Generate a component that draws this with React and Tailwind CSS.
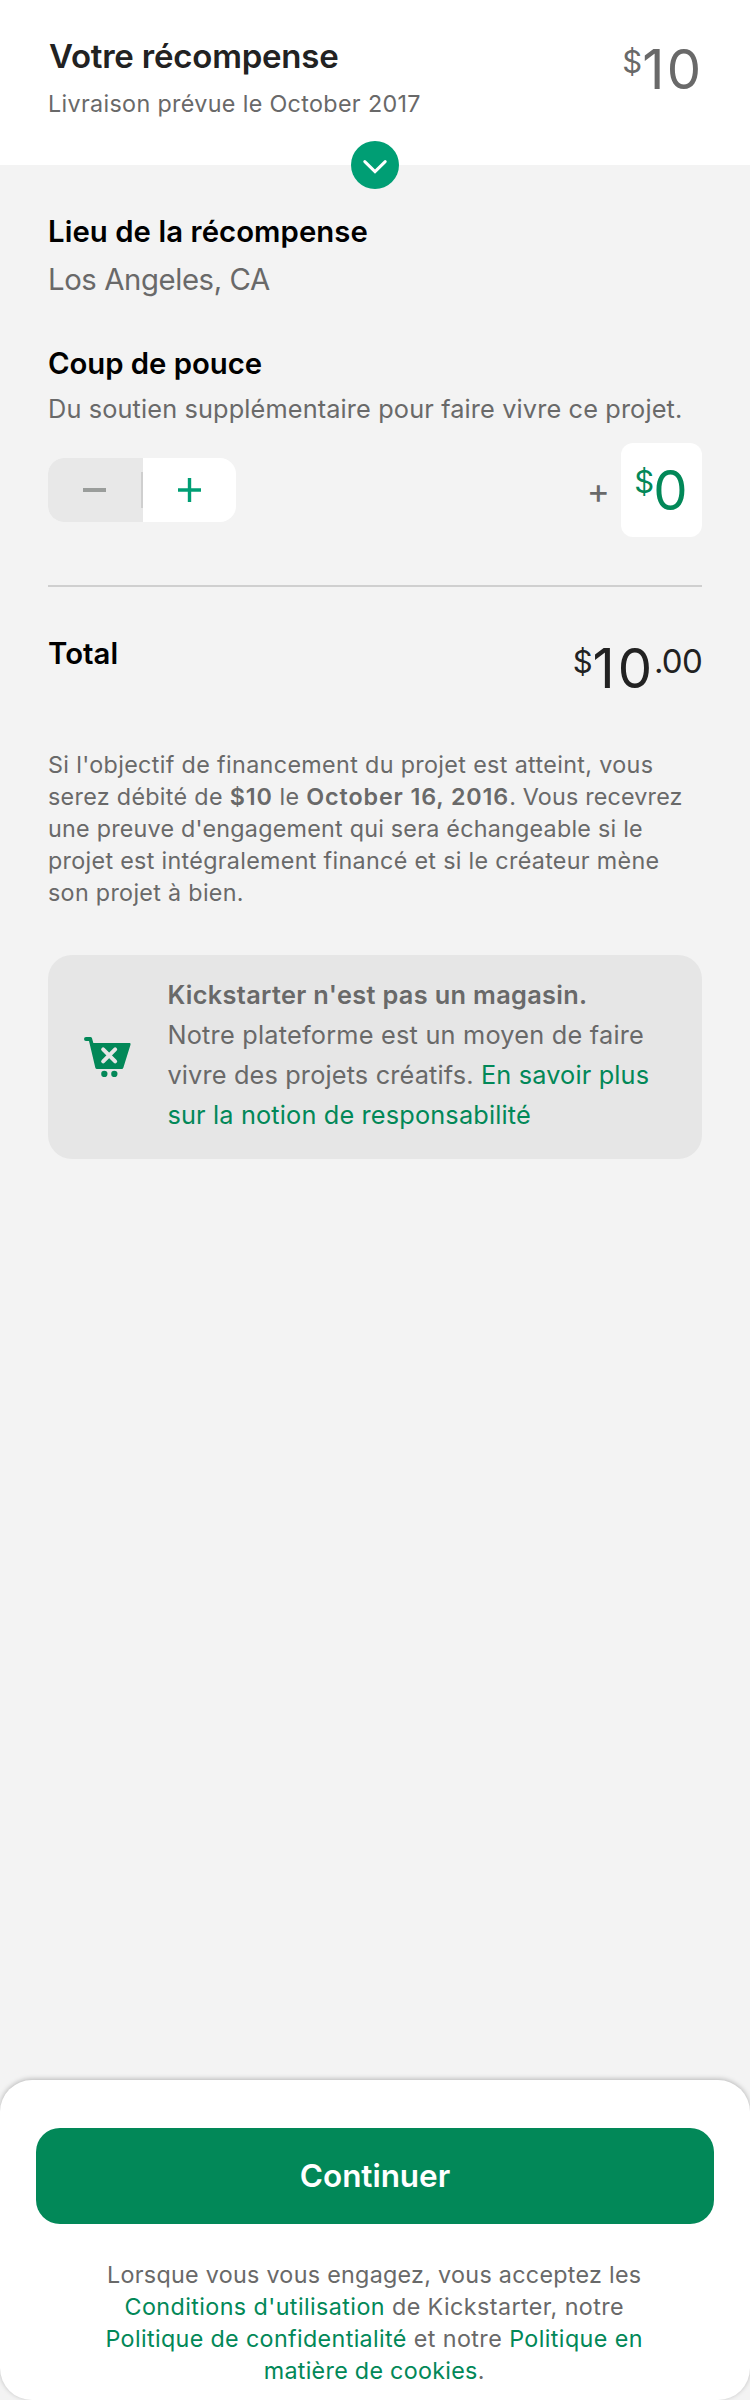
const Chevron = () => (
  <svg viewBox="0 0 48 48" className="size-12" fill="none" stroke="white" strokeWidth="3" strokeLinecap="round">
    <path d="M13.8 20.6 24 30.6 34.2 20.6" />
  </svg>
);

const Plus = () => (
  <svg viewBox="0 0 23 24" className="h-6 w-[23px]" stroke="#009e74" strokeWidth="3.4">
    <path d="M0 12H23M11.5 0V24" />
  </svg>
);

const Cart = () => (
  <svg viewBox="0 0 141 120" className="h-10 w-[47px]" fill="#028858">
    <path d="M6 0H19Q23 0 24 4L28 18H137Q141 18 139.5 23L118 92Q117 96 113 96H39Q35 96 34 92L15 12H6Q0 12 0 6T6 0Z" />
    <path d="M57.5 37 93.5 73M93.5 37 57.5 73" stroke="#e6e6e6" strokeWidth="12" strokeLinecap="round" />
    <circle cx="61" cy="111" r="9.5" />
    <circle cx="91" cy="111" r="9.5" />
  </svg>
);

const RewardHeader = () => (
  <header className="relative flex h-[165px] items-start justify-between bg-white px-12 pt-9">
    <div>
      <h1 className="ml-px text-[33px] leading-[40px] font-semibold tracking-[-0.213px] text-[#222]">Votre récompense</h1>
      <p className="mt-3 text-[23.3px] leading-[32px] tracking-[0.346px]">Livraison prévue le October 2017</p>
    </div>
    <div className="flex items-start">
      <span className="mt-1.5 text-[31px] leading-[40px]">$</span>
      <span className="mr-[-1.4px] text-[54.5px] leading-[66px] tracking-[2.3px]">10</span>
    </div>
    <button className="absolute -bottom-6 left-1/2 -translate-x-1/2 rounded-full bg-[#009e74]">
      <Chevron />
    </button>
  </header>
);

const BonusRow = () => (
  <div className="mt-[18px] flex h-[94px] items-center justify-between">
    <div className="flex h-16 w-[188px] overflow-hidden rounded-2xl bg-white">
      <button className="flex w-[95px] items-center justify-end bg-[#e8e8e8]">
        <span className="h-1 w-[23px] bg-[#9a9d9b]" />
        <span className="ml-[35px] h-9 w-0.5 bg-[#cfcfcf]" />
      </button>
      <button className="flex flex-1 items-center pl-[35px]">
        <Plus />
      </button>
    </div>
    <div className="flex items-center">
      <span className="mr-[11px] text-[35px] leading-[40px]">+</span>
      <div className="flex h-[94px] w-[81px] items-start justify-center rounded-xl bg-white pt-3.5 pr-px text-[#028858]">
        <span className="mt-[5px] text-[31px] leading-[40px]">$</span>
        <span className="-ml-px text-[54.5px] leading-[66px]">0</span>
      </div>
    </div>
  </div>
);

const TotalRow = () => (
  <div className="mt-12 flex h-[66px] items-start text-[#222]">
    <h2 className="mt-px mr-auto text-[29.3px] leading-[36px] font-semibold tracking-[0.075px] text-black">Total</h2>
    <span className="mt-[7px] text-[31px] leading-[40px]">$</span>
    <span className="mr-[-1.2px] text-[54.5px] leading-[66px] tracking-[3px]">10</span>
    <span className="mt-1.5 text-[33px] leading-[40px] tracking-[-0.744px]">.00</span>
  </div>
);

const Notice = () => (
  <section className="mt-[46px] flex h-[204px] items-center rounded-3xl bg-[#e6e6e6] pl-9">
    <Cart />
    <p className="mt-[-4px] ml-[36.4px] text-[25.3px] leading-[40px] tracking-[0.16px]">
      <strong className="font-semibold tracking-[0.344px]">Kickstarter n'est pas un magasin.</strong>
      <br />
      <span className="tracking-[0.224px]">Notre plateforme est un moyen de faire</span>
      <br />
      vivre des projets créatifs.{" "}
      <a className="text-[#028858]">
        En savoir plus
        <br />
        sur la notion de responsabilité
      </a>
    </p>
  </section>
);

const Footer = () => (
  <footer className="mt-auto h-80 rounded-[32px] bg-white px-9 pt-12 shadow-[0_-1px_5px_rgba(0,0,0,0.25)]">
    <button className="h-24 w-full rounded-3xl bg-[#028858] text-[31.5px] leading-[40px] font-semibold tracking-[-0.05px] text-white">
      Continuer
    </button>
    <p className="mt-[35px] pr-[1.5px] text-center text-[23.3px] leading-[32px] tracking-[0.42px] [&_a]:text-[#028858]">
      <span className="tracking-[0.291px]">Lorsque vous vous engagez, vous acceptez les</span>
      <br />
      <a>Conditions d'utilisation</a> de Kickstarter, notre
      <br />
      <a className="tracking-[0.352px]">Politique de confidentialité</a> et notre{" "}
      <a>
        Politique en
        <br />
        <span className="tracking-[0.282px]">matière de cookies</span>
      </a>
      .
    </p>
  </footer>
);

export default function App() {
  return (
    <div className="flex h-[2400px] w-[750px] flex-col bg-[#f3f3f3] font-[Inter,sans-serif] whitespace-nowrap text-[#696969]">
      <RewardHeader />
      <main className="px-12 pt-[49px]">
        <h2 className="text-[29.3px] leading-[36px] font-semibold tracking-[0.077px] text-black">Lieu de la récompense</h2>
        <p className="mt-3 text-[29.3px] leading-[36px] tracking-[-0.397px]">Los Angeles, CA</p>
        <h2 className="mt-12 text-[29.3px] leading-[36px] font-semibold tracking-[-0.037px] text-black">Coup de pouce</h2>
        <p className="mt-[11px] text-[25.3px] leading-[32px] tracking-[0.134px]">
          Du soutien supplémentaire pour faire vivre ce projet.
        </p>
        <BonusRow />
        <div className="mt-12 h-0.5 bg-[#cfcfcf]" />
        <TotalRow />
        <p className="mt-12 text-[23.3px] leading-[32px] tracking-[0.315px]">
          <span className="tracking-[0.355px]">Si l'objectif de financement du projet est atteint, vous</span>
          <br />
          serez débité de <strong className="font-semibold tracking-[0.89px]">$10</strong> le{" "}
          <strong className="font-semibold tracking-[0.89px]">October 16, 2016</strong>
          <span className="tracking-[0.188px]">. Vous recevrez</span>
          <br />
          <span className="tracking-[0.24px]">une preuve d'engagement qui sera échangeable si le</span>
          <br />
          projet est intégralement financé et si le créateur mène
          <br />
          son projet à bien.
        </p>
        <Notice />
      </main>
      <Footer />
    </div>
  );
}
